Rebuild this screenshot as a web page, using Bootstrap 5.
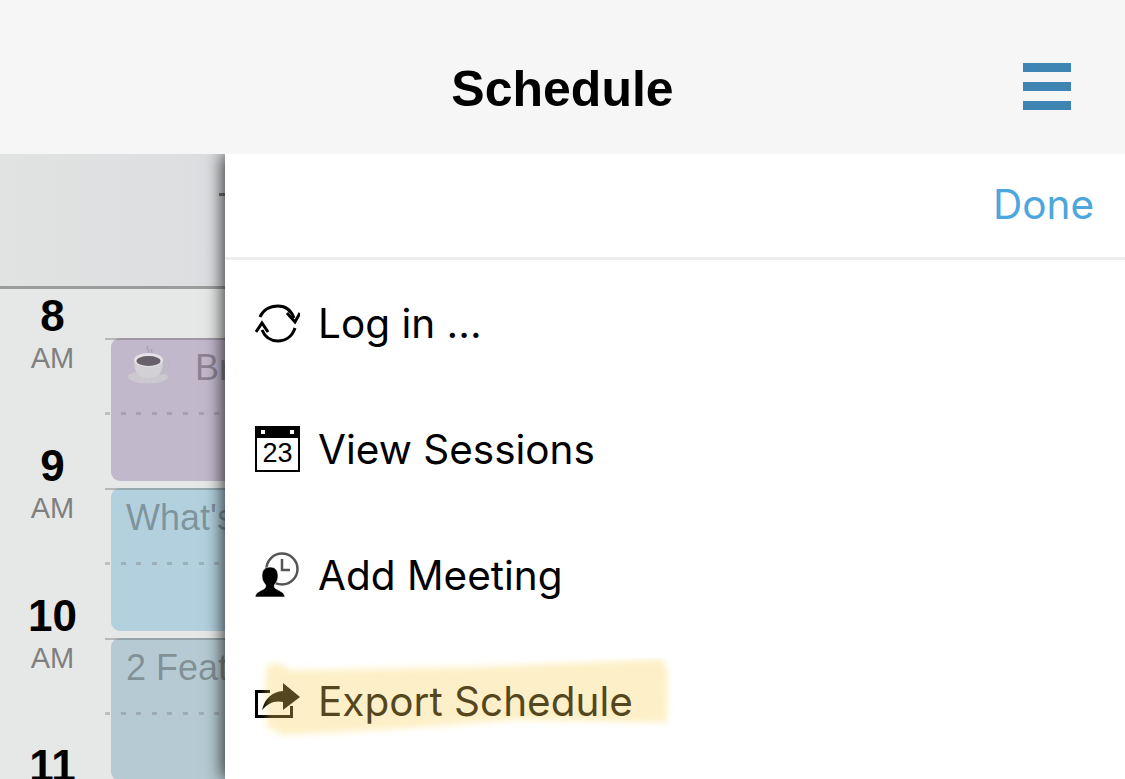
<!DOCTYPE html>
<html lang="en">
<head>
    <meta charset="UTF-8">
    <meta name="viewport" content="width=device-width, initial-scale=1.0">
    <title>Schedule</title>
    <link rel="stylesheet" href="https://cdn.jsdelivr.net/npm/bootstrap@5.3.0/dist/css/bootstrap.min.css">
    <style>
        html, body {
            height: 779px;
            overflow: hidden;
        }

        body {
            font-family: "Liberation Sans", Arial, sans-serif;
            background-color: #fff;
        }

        .top-bar {
            height: 154px;
            background-color: #f6f6f6;
            padding: 23px 0 0;
            position: relative;
            z-index: 3;
        }

        .top-title {
            font-size: 50px;
            font-weight: 700;
            color: #000;
            line-height: 1;
        }

        .burger {
            right: 54px;
            top: 63px;
            width: 48px;
            gap: 10px;
        }

        .burger span {
            display: block;
            height: 9px;
            background-color: #3f85b3;
            filter: blur(.5px);
        }

        .main-area {
            height: 625px;
        }

        .cal-pane {
            width: 225px;
            overflow: hidden;
            background-color: #e6e8e8;
        }

        .cal-head {
            height: 135px;
            background: linear-gradient(90deg, #e1e3e2, #dcdde0);
            border-bottom: 3px solid #9b9c9c;
            position: relative;
        }

        .cal-head::after {
            content: "";
            position: absolute;
            right: 0;
            top: 39px;
            width: 6px;
            height: 3px;
            background-color: #777;
        }

        .hours-col {
            width: 105px;
            flex: none;
        }

        .hour-slot {
            height: 150px;
            text-align: center;
        }

        .hour-num {
            font-size: 44px;
            font-weight: 700;
            line-height: 54px;
            color: #000;
        }

        .hour-ampm {
            font-size: 29px;
            line-height: 30px;
            color: #808080;
        }

        .lanes-col {
            padding-top: 49px;
            width: 240px;
            flex: none;
        }

        .lane-row {
            height: 150px;
            padding-left: 6px;
            position: relative;
        }

        .lane-row::before {
            content: "";
            position: absolute;
            left: 0;
            right: 0;
            top: 0;
            height: 2px;
            background-color: rgba(90, 90, 90, .34);
        }

        .lane-row::after {
            content: "";
            position: absolute;
            left: 0;
            right: 0;
            top: 74px;
            height: 3px;
            background: repeating-linear-gradient(90deg, rgba(120, 120, 120, .36) 0 5px, transparent 5px 15.6px);
        }

        .cal-event {
            height: 143px;
            border-radius: 9px;
            padding: 8px 15px;
            font-size: 36px;
            line-height: 44px;
            color: rgba(0, 0, 0, .3);
            white-space: nowrap;
        }

        .ev-break {
            background-color: #c1b8cc;
        }

        .ev-whats {
            background-color: #b2d0dd;
        }

        .ev-feat {
            background-color: #b5cad2;
        }

        .cup-icon {
            width: 46px;
            height: 46px;
            flex: none;
            margin: -2px 23px 0 0;
        }

        .sheet-pane {
            position: relative;
            z-index: 2;
            background-color: #fff;
            box-shadow: -3px 0 16px rgba(0, 0, 0, .72);
        }

        .sheet-head {
            height: 106px;
            border-bottom: 3px solid #eee;
            padding-right: 31px;
        }

        .done-link {
            font-family: Inter, "Liberation Sans", sans-serif;
            font-size: 40.5px;
            color: #4da6dc;
            text-decoration: none;
        }

        .menu-row {
            height: 126px;
            padding: 0 0 0 30px;
            border: 0;
            gap: 18px;
            font-family: Inter, "Liberation Sans", sans-serif;
            font-size: 40.5px;
            color: #000;
            position: relative;
        }

        .menu-row > span {
            padding-top: 2px;
        }

        .menu-icon {
            width: 45px;
            height: 46px;
            flex: none;
        }

        .marker-paint {
            position: absolute;
            left: 35px;
            top: 20px;
            width: 415px;
            height: 82px;
            pointer-events: none;
        }
    </style>
</head>
<body>
<nav class="navbar top-bar justify-content-center">
    <span class="top-title">Schedule</span>
    <div class="burger position-absolute d-flex flex-column">
        <span></span>
        <span></span>
        <span></span>
    </div>
</nav>

<div class="main-area d-flex">
    <div class="cal-pane flex-shrink-0">
        <div class="cal-head"></div>
        <div class="d-flex">
            <div class="hours-col">
                <div class="hour-slot"><div class="hour-num">8</div><div class="hour-ampm">AM</div></div>
                <div class="hour-slot"><div class="hour-num">9</div><div class="hour-ampm">AM</div></div>
                <div class="hour-slot"><div class="hour-num">10</div><div class="hour-ampm">AM</div></div>
                <div class="hour-slot"><div class="hour-num">11</div><div class="hour-ampm">AM</div></div>
            </div>
            <div class="lanes-col">
                <div class="lane-row">
                    <div class="cal-event ev-break d-flex">
                        <svg class="cup-icon" viewBox="0 0 46 46">
                            <path d="M22 2c-3 3 3 4 0 8M26 5c-2 2 1 3 0 5" fill="none" stroke="#a9a4b0" stroke-width="1.500"/>
                            <ellipse cx="22" cy="33" rx="20" ry="6.500" fill="#cbc8d0"/>
                            <path d="M8 16h29c0 12-4 18-14.500 18S8 28 8 16z" fill="#d2d0d4"/>
                            <path d="M36 18c6-2 9 2 7 6s-5 5-9 6" fill="none" stroke="#bcb9c1" stroke-width="2"/>
                            <ellipse cx="22.500" cy="16" rx="14.500" ry="7" fill="#e4e2e6"/>
                            <ellipse cx="22.500" cy="17" rx="12" ry="5" fill="#675f69"/>
                        </svg><span>Break</span>
                    </div>
                </div>
                <div class="lane-row"><div class="cal-event ev-whats">What's New</div></div>
                <div class="lane-row"><div class="cal-event ev-feat">2 Features</div></div>
            </div>
        </div>
    </div>

    <div class="sheet-pane flex-grow-1">
        <div class="sheet-head d-flex justify-content-end align-items-center">
            <a class="done-link" href="#">Done</a>
        </div>
        <div class="list-group list-group-flush">
            <div class="list-group-item menu-row d-flex align-items-center">
                <svg class="menu-icon" viewBox="0 0 45 46">
                    <g fill="none" stroke="#000" stroke-width="3">
                        <path d="M5 17C8 10 15 6 23 6 30 6 36 10 39 18"/>
                        <path d="M32 13l8 9 5-9"/>
                        <path d="M7 30c3 7 9 11 16 11 7 0 14-4 17-13"/>
                        <path d="M1 32l6-9 6 9"/>
                    </g>
                </svg>
                <span>Log in ...</span>
            </div>
            <div class="list-group-item menu-row d-flex align-items-center">
                <svg class="menu-icon" viewBox="0 0 45 46">
                    <rect x="1" y="1" width="43" height="44" fill="#fff" stroke="#000" stroke-width="2"/>
                    <rect x="0" y="0" width="45" height="12" fill="#000"/>
                    <rect x="6" y="4" width="4" height="4" fill="#fff"/>
                    <rect x="35" y="4" width="4" height="4" fill="#fff"/>
                    <text x="22.500" y="36" text-anchor="middle" font-family="Liberation Sans" font-size="27">23</text>
                </svg>
                <span>View Sessions</span>
            </div>
            <div class="list-group-item menu-row d-flex align-items-center">
                <svg class="menu-icon" viewBox="0 0 45 46">
                    <circle cx="27" cy="17" r="15.500" fill="#fff" stroke="#555" stroke-width="2.500"/>
                    <path d="M27 7v11h8" fill="none" stroke="#555" stroke-width="2.500"/>
                    <path d="M0 45c1-6 7-6 10-9 1-1 1-3 0-4-2-2-3-5-3-8 0-6 3-9 8-9s8 3 8 9c0 3-1 6-3 8-1 1-1 3 0 4 3 3 9 3 10 9z" fill="#000" stroke="#fff" stroke-width=".6"/>
                </svg>
                <span>Add Meeting</span>
            </div>
            <div class="list-group-item menu-row d-flex align-items-center">
                <svg class="menu-icon" viewBox="0 0 45 46">
                    <path d="M15 13.500H1.500v25h35V28" fill="none" stroke="#000" stroke-width="3"/>
                    <path d="M7 32C10 20 17 14 28 13V5l17 14-17 13v-8C20 22 13 25 7 32z" fill="#000"/>
                </svg>
                <span>Export Schedule</span>
                <svg class="marker-paint" viewBox="0 0 415 82">
                    <defs><filter id="soft" x="-5%" y="-20%" width="110%" height="140%"><feGaussianBlur stdDeviation="3"/></filter></defs>
                    <path d="M7 7 20 5 30 12 210 9 403 1 408 15 407 65 257 62 123 72 23 77 7 69 5 32z" fill="rgb(249,211,89)" fill-opacity=".337" filter="url(#soft)"/>
                </svg>
            </div>
        </div>
    </div>
</div>

<script src="https://cdn.jsdelivr.net/npm/bootstrap@5.3.0/dist/js/bootstrap.bundle.min.js"></script>
</body>
</html>
